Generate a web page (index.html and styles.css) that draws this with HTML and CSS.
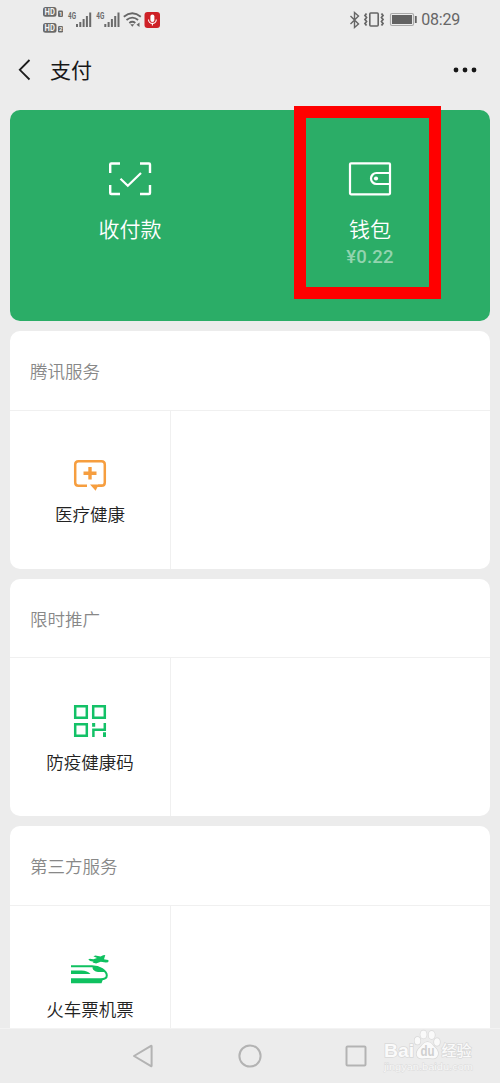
FILE: index.html
```html
<!DOCTYPE html>
<html lang="zh-CN">
<head>
<meta charset="utf-8">
<title>支付</title>
<link rel="stylesheet" href="styles.css">
</head>
<body>
<div class="phone">
  <div class="status">
    <svg class="status-left" width="120" height="40" viewBox="0 0 120 40">
      <g fill="#6a6a6a">
        <rect x="1" y="7" width="13.500" height="9.800" rx="2.500"/><rect x="1" y="23" width="13.500" height="9.800" rx="2.500"/>
        <rect x="16" y="10.500" width="5" height="6.500" rx="1.200"/><rect x="16" y="26" width="5" height="6.500" rx="1.200"/>
        <text class="net" x="26" y="19" textLength="8" lengthAdjust="spacingAndGlyphs">4G</text><text class="net" x="54.300" y="19" textLength="8" lengthAdjust="spacingAndGlyphs">4G</text>
        <path id="signal" d="M34 24h2v3h-2zM37.300 22h2v5h-2zM40.600 19h2v8h-2zM43.900 16h2v11h-2zM47.200 12.500h2v14.500h-2z"/>
        <use href="#signal" x="28.300"/>
      </g>
      <g fill="#f4f4f4">
        <text class="hd" x="2.600" y="14.900" textLength="10.300" lengthAdjust="spacingAndGlyphs">HD</text><text class="hd" x="2.600" y="30.900" textLength="10.300" lengthAdjust="spacingAndGlyphs">HD</text>
        <text class="sim" x="17" y="15.900">1</text><text class="sim" x="17" y="31.400">2</text>
      </g>
      <g fill="none" stroke="#666" stroke-width="1.800">
        <path d="M81.800 16.800q8.500-7 17 0M84.500 20q5.800-4.800 11.600 0M87.300 23q3-2.500 6 0"/>
      </g>
      <path d="M88.300 24.200h4l-2 2.500zM97.500 22.500v4.500l-3-2.200z" fill="#666"/>
      <rect x="102.500" y="12" width="15.500" height="16" rx="3" fill="#ce2127"/>
      <rect x="108.400" y="14.500" width="4" height="7.500" rx="2" fill="#fff"/>
      <path d="M106.500 19.500a3.900 3.900 0 0 0 7.800 0M110.400 23.500v2" fill="none" stroke="#fff" stroke-width="1.100"/>
    </svg>
    <svg class="status-right" width="68" height="40" viewBox="0 0 68 40">
      <g fill="none" stroke="#666" stroke-width="1.400">
        <path d="M1.500 16l8 8-4 3.500v-15l4 3.500-8 8"/>
        <rect x="20.800" y="13" width="8.400" height="13" rx="1" stroke-width="1.600"/>
        <path d="M17.500 13.500l-1.500 2 1.500 2-1.500 2 1.500 2-1.500 2 1.500 2M32.500 13.500l1.500 2-1.500 2 1.500 2-1.500 2 1.500 2-1.500 2" stroke-width="1.800"/>
        <rect x="41.500" y="13.500" width="23" height="12" rx="1.500" stroke="#aaa" stroke-width="1.200"/>
      </g>
      <path d="M43 15h20v9H43zM65.900 16h1.800v7h-1.800z" fill="#626262"/>
    </svg>
    <span class="clock">08:29</span>
  </div>

  <header class="header">
    <svg class="back" width="15" height="22" viewBox="0 0 15 22"><path d="M12.500 1L2.800 10.800l9.700 9.700" fill="none" stroke="#1c1c1c" stroke-width="1.800"/></svg>
    <h1 class="title">支付</h1>
    <svg class="more" width="26" height="6" viewBox="0 0 26 6" fill="#161616"><circle cx="4" cy="3" r="2.400"/><circle cx="13" cy="3" r="2.400"/><circle cx="22" cy="3" r="2.400"/></svg>
  </header>

  <main class="content">
    <section class="pay">
      <div class="pay-item">
        <svg width="44" height="36" viewBox="0 0 44 36" fill="none" stroke="#fff" stroke-width="2.400"><path d="M2.200 13V4.500q0-1 1-1H12M32 3.500h9q1 0 1 1V13M42 25v8q0 1-1 1h-9M12 34H3.200q-1 0-1-1v-8"/><path d="M12.500 18.700l7.300 7L33 13" stroke-width="2.200"/></svg>
        <span class="pay-label">收付款</span>
      </div>
      <div class="pay-item">
        <svg width="44" height="36" viewBox="0 0 44 36" fill="none" stroke="#fff" stroke-width="2.200"><rect x="2" y="3.300" width="40" height="31" rx="1"/><path d="M42 13H28.500a5.500 5.500 0 0 0 0 11H42"/><circle cx="28" cy="18.500" r="2.100" fill="#fff" stroke="none"/></svg>
        <span class="pay-label">钱包</span>
        <span class="amount">¥0.22</span>
      </div>
      <div class="highlight"></div>
    </section>

    <section class="card">
      <h2 class="card-title">腾讯服务</h2>
      <div class="grid">
        <div class="cell">
          <svg width="40" height="36" viewBox="0 0 40 36"><path d="M17 29.700H8.500q-3.300 0-3.300-3.300V8.500q0-3.300 3.300-3.300h23q3.300 0 3.300 3.300v17.900q0 3.300-3.300 3.300H28" fill="none" stroke="#f69e3f" stroke-width="2.500"/><path d="M20 28.500h12V31h-4.500L25.600 34.700zM18.300 11h3.400v4.500h4.800v3.400h-4.800v4.500h-3.400v-4.500h-4.800v-3.400h4.800z" fill="#f69e3f"/></svg>
          <span>医疗健康</span>
        </div>
      </div>
    </section>

    <section class="card">
      <h2 class="card-title">限时推广</h2>
      <div class="grid">
        <div class="cell">
          <svg width="40" height="36" viewBox="0 0 40 36"><g fill="none" stroke="#13c167" stroke-width="2.500"><path d="M5.200 3.200h11.600v11.600H5.200zM23.200 3.200h11.600v11.600H23.200zM5.200 21.200h11.600v11.600H5.200zM23.400 34v-7.300h11.400V20"/></g><path d="M22.100 20h3.100v3.800h-3.100zM33 29.300h3V34h-3z" fill="#13c167"/></svg>
          <span>防疫健康码</span>
        </div>
      </div>
    </section>

    <section class="card">
      <h2 class="card-title">第三方服务</h2>
      <div class="grid">
        <div class="cell">
          <svg width="40" height="36" viewBox="0 0 40 36">
            <path d="M1 15.300h21c7.500 0 14.800 4.500 14.800 9.300 0 2.500-2.400 3.700-6 3.700H1" fill="none" stroke="#0fc160" stroke-width="2"/>
            <path d="M1 28.300h32l-1.500 4H1zM1 19.400h10.500c4 0 7 1.300 9 3.600H1zM23 15c5.500 0 10 2.800 12.500 6h-7.500q-5-1-5.500-4z" fill="#0fc160"/>
            <path d="M18.300 8.400l1.600-.7 3.500.6 3.600-1.300-3.600-1.800 2-.8 5.200 1.100 2.500-1.300 2.200-.3-1.300 4.300 2.500.6q2-.1 2.200 1.200-.2 1.700-3 1.600l-5-.9-4.600 1.700-3.500-.8 1-.9-3.500-.6z" fill="#0fc160"/>
          </svg>
          <span>火车票机票</span>
        </div>
      </div>
    </section>
  </main>

  <nav class="navbar">
    <svg width="22" height="24" viewBox="0 0 22 24"><path d="M2 12l17-10.200q.6-.3.600.4v19.600q0 .7-.6.400z" fill="none" stroke="#b3b3b3" stroke-width="2" stroke-linejoin="round"/></svg>
    <svg width="24" height="24" viewBox="0 0 24 24"><circle cx="12" cy="12" r="10.600" fill="none" stroke="#b3b3b3" stroke-width="2"/></svg>
    <svg width="22" height="22" viewBox="0 0 22 22"><rect x="1.500" y="1.500" width="19" height="19" rx="1" fill="none" stroke="#b3b3b3" stroke-width="2"/></svg>
  </nav>

  <svg class="watermark" width="96" height="50" viewBox="0 0 96 50">
    <g fill="#fafafa" stroke="#d8d8d8" stroke-width="1.400" paint-order="stroke">
      <text class="wm-bai" x="2" y="30.600" textLength="30" lengthAdjust="spacingAndGlyphs">Bai</text>
      <text class="wm-cjk" x="59.500" y="29.500" textLength="30">经验</text>
      <ellipse cx="35.500" cy="14.700" rx="2.900" ry="3.800"/><ellipse cx="41.500" cy="8.500" rx="3.100" ry="4.100"/><ellipse cx="49.700" cy="9" rx="3.100" ry="4.100"/><ellipse cx="55" cy="16" rx="2.900" ry="3.800"/>
      <path d="M45.500 16c4 0 5 3.500 8 6 5 5 2 11-3 10.500q-5-1-10 0c-6 .5-8-5.500-3-10.500 3-2.500 4-6 8-6z"/>
    </g>
    <text class="wm-url" x="2" y="44" textLength="89" lengthAdjust="spacingAndGlyphs" fill="#f8f8f8" stroke="#dadada" stroke-width=".8" paint-order="stroke">jingyan.baidu.com</text>
    <text class="wm-du" x="38.500" y="30" textLength="14" lengthAdjust="spacingAndGlyphs">du</text>
  </svg>
</div>
</body>
</html>
```
FILE: styles.css
```css
* { box-sizing: border-box; }

body {
  margin: 0;
  background: #ececec;
  font-family: "Noto Sans CJK SC", sans-serif;
  font-weight: 350;
  color: #222;
}

svg { display: block; flex: none; }

.phone {
  position: relative;
  display: flex;
  flex-direction: column;
  width: 500px;
  height: 1083px;
  overflow: hidden;
}

.status {
  display: flex;
  align-items: center;
  flex: none;
  height: 40px;
  padding: 0 40px 0 42px;
}

.status-right { margin-left: auto; }

.clock {
  margin-left: 4px;
  font: 400 16px/40px Roboto, sans-serif;
  letter-spacing: -0.2px;
  color: #666;
}

.net { font: 700 9px Roboto, sans-serif; }
.hd { font: 700 8.500px Roboto, sans-serif; }
.sim { font: 700 6px Roboto, sans-serif; }

.header {
  display: flex;
  align-items: center;
  flex: none;
  height: 60px;
  padding: 0 22px 0 17px;
}

.title {
  margin: 0 0 2px 18px;
  font-size: 21px;
  font-weight: 400;
  line-height: 30px;
  color: #181818;
}

.more { margin-left: auto; }

.content {
  display: flex;
  flex: 1;
  flex-direction: column;
  gap: 10px;
  min-height: 0;
  padding: 10px 10px 0;
  overflow: hidden;
}

.pay {
  position: relative;
  display: grid;
  grid-template-columns: 1fr 1fr;
  flex: none;
  height: 211px;
  border-radius: 10px;
  background: #2bad67;
  color: #fff;
}

.pay-item {
  display: flex;
  flex-direction: column;
  align-items: center;
  padding-top: 50px;
}

.pay-label {
  margin-top: 17px;
  font-size: 21px;
  line-height: 30px;
}

.amount {
  margin-top: 2px;
  font: 500 18.500px/24px Roboto, sans-serif;
  letter-spacing: 0.2px;
  color: #93d4af;
}

.highlight {
  position: absolute;
  top: -4px;
  left: 284px;
  width: 147px;
  height: 193px;
  border: 12px solid #f00;
}

.card {
  flex: none;
  height: 237.500px;
  border-radius: 10px;
  background: #fff;
  overflow: hidden;
}

.card-title {
  height: 79.500px;
  margin: 0;
  padding-left: 20px;
  border-bottom: 1px solid #f0f0f0;
  font-size: 17.500px;
  font-weight: 350;
  line-height: 79px;
  color: #888;
}

.grid {
  display: grid;
  grid-template-columns: 161px 1fr;
  height: 158px;
}

.cell {
  display: flex;
  flex-direction: column;
  align-items: center;
  padding-top: 45px;
  border-right: 1px solid #f0f0f0;
  font-size: 17.500px;
  line-height: 26px;
}

.cell span { margin-top: 9.700px; }

.navbar {
  display: flex;
  align-items: center;
  justify-content: space-between;
  flex: none;
  height: 55px;
  padding: 0 133px 0 132px;
  border-top: 1px solid #f3f3f3;
}

.watermark {
  position: absolute;
  left: 382px;
  top: 1026px;
}

.wm-bai { font: 700 18.500px "Liberation Sans", sans-serif; }
.wm-cjk { font: 500 15px "Noto Sans CJK SC", sans-serif; }
.wm-url { font: 400 9.500px "Liberation Sans", sans-serif; }
.wm-du { font: 700 14px "Liberation Sans", sans-serif; fill: #cfcfcf; }
```
